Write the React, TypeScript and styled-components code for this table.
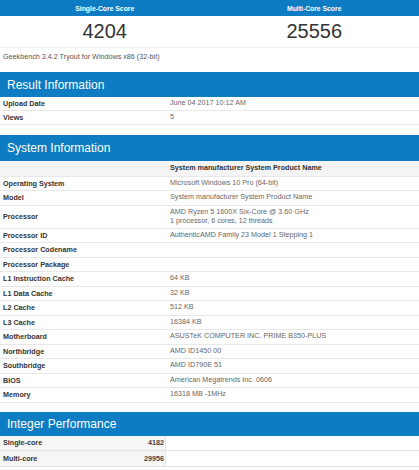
import React from "react";
import styled, { createGlobalStyle } from "styled-components";

const Global = createGlobalStyle`
  html, body { margin: 0; padding: 0; background: #fff; }
  body { font-family: "Liberation Sans", Arial, sans-serif; color: #333; }
`;

const BLUE = "#0d7cc2";

const Page = styled.div`
  width: 419px;
  display: flex;
  flex-direction: column;
`;

const ScoreHead = styled.div`
  display: grid;
  grid-template-columns: 1fr 1fr;
  height: 16px;
  background: ${BLUE};
  color: #fff;
  font-weight: bold;
  font-size: 6.8px;
  align-items: center;
  text-align: center;
`;

const ScoreVals = styled.div`
  display: grid;
  grid-template-columns: 1fr 1fr;
  height: 31px;
  align-items: center;
  text-align: center;
  font-size: 20px;
  color: #333;
  border-bottom: 1px solid #eee;
`;

const Caption = styled.div`
  font-size: 7.2px;
  color: #555;
  padding: 4px 3px 0;
  height: 16px;
  box-sizing: border-box;
`;

const Section = styled.section<{ $gap: number }>`
  margin-top: ${(p) => p.$gap}px;
`;

const SectionHead = styled.div<{ $h: number }>`
  height: ${(p) => p.$h}px;
  background: ${BLUE};
  color: #fff;
  font-size: 12px;
  display: flex;
  align-items: center;
  padding-left: 7px;
`;

const Row = styled.div<{ $h?: number; $sub?: boolean }>`
  display: grid;
  grid-template-columns: 167px 1fr;
  min-height: ${(p) => p.$h ?? 14.5}px;
  align-items: center;
  border-bottom: 1px solid #e8e8e8;
  box-sizing: border-box;
  background: ${(p) => (p.$sub ? "#f4f4f4" : "#fff")};
  font-size: 7.2px;
`;

const Label = styled.div`
  font-weight: bold;
  color: #333;
  padding-left: 3px;
`;

const Value = styled.div<{ $bold?: boolean }>`
  color: ${(p) => (p.$bold ? "#333" : "#666")};
  font-weight: ${(p) => (p.$bold ? "bold" : "normal")};
  padding-left: 3px;
  line-height: 8.6px;
`;

const PerfRow = styled.div`
  display: grid;
  grid-template-columns: 166px 1fr;
  height: 15.5px;
  border-bottom: 1px solid #e2e2e2;
  box-sizing: border-box;
  font-size: 7.2px;
`;

const PerfCell = styled.div`
  display: flex;
  align-items: center;
  justify-content: space-between;
  background: #f6f6f6;
  padding: 0 1px 0 3px;
  border-right: 1px solid #e6e6e6;
`;

const PerfLabel = styled.span`
  font-weight: bold;
  color: #333;
`;

const PerfScore = styled.span`
  font-weight: bold;
  color: #444;
`;

const result: [string, string][] = [
  ["Upload Date", "June 04 2017 10:12 AM"],
  ["Views", "5"],
];

const system: [string, string[]][] = [
  ["Operating System", ["Microsoft Windows 10 Pro (64-bit)"]],
  ["Model", ["System manufacturer System Product Name"]],
  ["Processor", ["AMD Ryzen 5 1600X Six-Core @ 3.60 GHz", "1 processor, 6 cores, 12 threads"]],
  ["Processor ID", ["AuthenticAMD Family 23 Model 1 Stepping 1"]],
  ["Processor Codename", [""]],
  ["Processor Package", [""]],
  ["L1 Instruction Cache", ["64 KB"]],
  ["L1 Data Cache", ["32 KB"]],
  ["L2 Cache", ["512 KB"]],
  ["L3 Cache", ["16384 KB"]],
  ["Motherboard", ["ASUSTeK COMPUTER INC. PRIME B350-PLUS"]],
  ["Northbridge", ["AMD ID1450 00"]],
  ["Southbridge", ["AMD ID790E 51"]],
  ["BIOS", ["American Megatrends Inc. 0606"]],
  ["Memory", ["16318 MB -1MHz"]],
];

export default function App() {
  return (
    <Page>
      <Global />
      <ScoreHead>
        <div>Single-Core Score</div>
        <div>Multi-Core Score</div>
      </ScoreHead>
      <ScoreVals>
        <div>4204</div>
        <div>25556</div>
      </ScoreVals>
      <Caption>Geekbench 3.4.2 Tryout for Windows x86 (32-bit)</Caption>

      <Section $gap={8}>
        <SectionHead $h={25}>Result Information</SectionHead>
        {result.map(([k, v]) => (
          <Row key={k} $h={14}>
            <Label>{k}</Label>
            <Value>{v}</Value>
          </Row>
        ))}
      </Section>

      <Section $gap={10}>
        <SectionHead $h={26}>System Information</SectionHead>
        <Row $sub $h={15.5}>
          <div />
          <Value $bold>System manufacturer System Product Name</Value>
        </Row>
        {system.map(([k, v]) => (
          <Row key={k} $h={v.length > 1 ? 23 : 14.5}>
            <Label>{k}</Label>
            <Value>
              {v.map((line, i) => (
                <div key={i}>{line}</div>
              ))}
            </Value>
          </Row>
        ))}
      </Section>

      <Section $gap={9}>
        <SectionHead $h={24}>Integer Performance</SectionHead>
        <PerfRow>
          <PerfCell>
            <PerfLabel>Single-core</PerfLabel>
            <PerfScore>4182</PerfScore>
          </PerfCell>
          <div />
        </PerfRow>
        <PerfRow>
          <PerfCell>
            <PerfLabel>Multi-core</PerfLabel>
            <PerfScore>29956</PerfScore>
          </PerfCell>
          <div />
        </PerfRow>
      </Section>
    </Page>
  );
}
